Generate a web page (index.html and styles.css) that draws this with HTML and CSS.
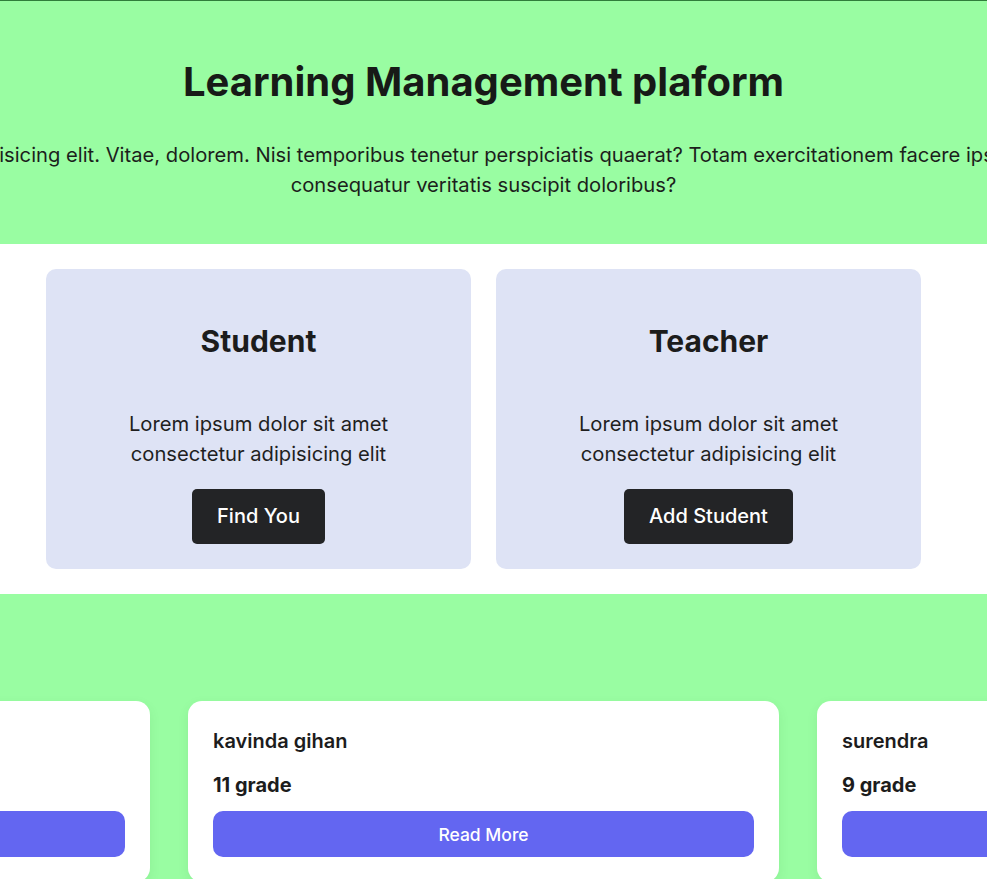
FILE: index.html
```html
<!DOCTYPE html>
<html lang="en">
<head>
<meta charset="utf-8">
<title>Learning Management plaform</title>
<link rel="stylesheet" href="styles.css">
</head>
<body>
  <header class="hero">
    <h1 class="hero-title">Learning Management plaform</h1>
    <p class="hero-text">Lorem ipsum dolor sit amet consectetur adipisicing elit. Vitae, dolorem. Nisi temporibus tenetur perspiciatis quaerat? Totam exercitationem facere ipsam quod, dolores nesciunt ratione quia se consequatur veritatis suscipit doloribus?</p>
  </header>

  <section class="roles">
    <div class="role-card">
      <h2 class="role-title">Student</h2>
      <p class="role-text">Lorem ipsum dolor sit amet consectetur adipisicing elit</p>
      <button class="role-btn">Find You</button>
    </div>
    <div class="role-card">
      <h2 class="role-title">Teacher</h2>
      <p class="role-text">Lorem ipsum dolor sit amet consectetur adipisicing elit</p>
      <button class="role-btn">Add Student</button>
    </div>
  </section>

  <section class="students">
    <div class="student-row">
      <div class="student-card">
        <h3 class="student-name">nimal perera</h3>
        <p class="student-grade">10 grade</p>
        <button class="read-btn">Read More</button>
      </div>
      <div class="student-card">
        <h3 class="student-name">kavinda gihan</h3>
        <p class="student-grade">11 grade</p>
        <button class="read-btn">Read More</button>
      </div>
      <div class="student-card">
        <h3 class="student-name">surendra</h3>
        <p class="student-grade">9 grade</p>
        <button class="read-btn">Read More</button>
      </div>
    </div>
  </section>
</body>
</html>
```

FILE: styles.css
```css
html, body {
  margin: 0;
  padding: 0;
  overflow-x: hidden;
}

body {
  font-family: Inter, "Noto Sans", sans-serif;
  color: #1c1c1c;
  background: #99fda2;
}

.hero {
  background: #99fda2;
  border-top: 1px solid #2f7d3a;
  padding: 0 20px 44px 0;
  display: flex;
  flex-direction: column;
  align-items: center;
}

.hero-title {
  margin: 57px 0 0;
  font-size: 40px;
  line-height: 48px;
  font-weight: 700;
  color: #171a17;
}

.hero-text {
  flex-shrink: 0;
  width: 1870px;
  margin: 34px 0 0;
  font-size: 20.2px;
  line-height: 30px;
  text-align: center;
  color: #1c1f1c;
}

.roles {
  background: #ffffff;
  padding: 25px 20px 25px 0;
  display: flex;
  justify-content: center;
  gap: 25px;
}

.role-card {
  width: 425px;
  box-sizing: border-box;
  background: #dee3f5;
  border-radius: 10px;
  padding: 54px 20px 25px;
  display: flex;
  flex-direction: column;
  align-items: center;
  text-align: center;
}

.role-title {
  margin: 0;
  font-size: 30px;
  line-height: 36px;
  font-weight: 700;
  color: #1c1c1c;
}

.role-text {
  margin: 50px 0 0;
  max-width: 300px;
  font-size: 20.2px;
  line-height: 30px;
  color: #1f1f1f;
}

.role-btn {
  margin-top: 20px;
  font-family: inherit;
  font-size: 20px;
  font-weight: 500;
  line-height: 27px;
  padding: 14px 25.5px;
  color: #ffffff;
  background: #232426;
  border: none;
  border-radius: 5px;
}

.students {
  background: #99fda2;
  padding: 107px 20px 40px 0;
  display: flex;
  justify-content: center;
}

.student-row {
  display: flex;
  justify-content: center;
  gap: 38px;
  width: 100%;
}

.student-card {
  flex: 0 0 591px;
  box-sizing: border-box;
  background: #ffffff;
  border-radius: 14px;
  padding: 25px;
  box-shadow: 0 4px 12px rgba(0, 80, 0, 0.08);
}

.student-name {
  margin: 0;
  font-size: 20px;
  line-height: 30px;
  font-weight: 600;
  color: #1c1c1c;
}

.student-grade {
  margin: 14px 0 0;
  font-size: 20px;
  line-height: 30px;
  font-weight: 700;
  color: #1c1c1c;
}

.read-btn {
  display: block;
  width: 100%;
  margin-top: 11px;
  height: 46px;
  font-family: inherit;
  font-size: 17.5px;
  font-weight: 500;
  color: #ffffff;
  background: #6366f1;
  border: none;
  border-radius: 10px;
}
```
